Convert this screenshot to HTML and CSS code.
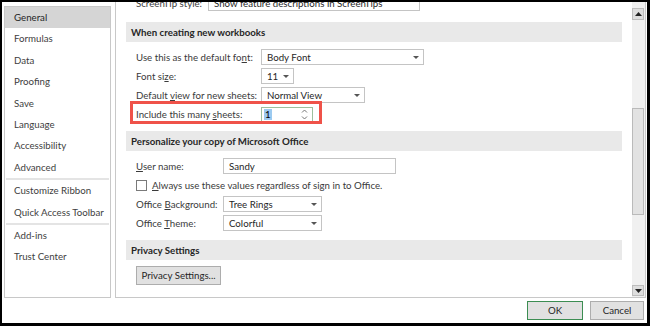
FILE: index.html
```html
<!DOCTYPE html>
<html>
<head>
<meta charset="utf-8">
<link rel="stylesheet" href="styles.css">
</head>
<body>
<div class="frame">
  <div class="dialog">
    <div class="main">
      <nav class="nav">
        <div class="nav-item active">General</div>
        <div class="nav-item">Formulas</div>
        <div class="nav-item">Data</div>
        <div class="nav-item">Proofing</div>
        <div class="nav-item">Save</div>
        <div class="nav-item">Language</div>
        <div class="nav-item">Accessibility</div>
        <div class="nav-item">Advanced</div>
        <div class="nav-sep"></div>
        <div class="nav-item">Customize Ribbon</div>
        <div class="nav-item">Quick Access Toolbar</div>
        <div class="nav-sep"></div>
        <div class="nav-item">Add-ins</div>
        <div class="nav-item">Trust Center</div>
      </nav>
      <section class="panel">
        <div class="viewport">
          <div class="content">
            <div class="row tip-row">
              <span class="label tip-label">ScreenTip style:</span>
              <div class="select tip-field">Show feature descriptions in ScreenTips</div>
            </div>

            <div class="band">When creating new workbooks</div>
            <div class="group wb">
              <div class="row">
                <span class="label">Use this as the default fo<u>n</u>t:</span>
                <div class="select w-font">Body Font<i class="caret"></i></div>
              </div>
              <div class="row">
                <span class="label">Font si<u>z</u>e:</span>
                <div class="select w-size">11<i class="caret"></i></div>
              </div>
              <div class="row">
                <span class="label">Default <u>v</u>iew for new sheets:</span>
                <div class="select w-view">Normal View<i class="caret"></i></div>
              </div>
              <div class="row hl-row">
                <span class="label">Include this many <u>s</u>heets:</span>
                <div class="spin"><span class="sel">1</span>
                  <svg class="spin-arrows" width="7" height="11" viewBox="0 0 7 11"><path d="M1 3.5 L3.5 1 L6 3.5 M1 7.5 L3.5 10 L6 7.5" fill="none" stroke="#777" stroke-width="1"/></svg>
                </div>
                <div class="highlight"></div>
              </div>
            </div>

            <div class="band">Personalize your copy of Microsoft Office</div>
            <div class="group pc">
              <div class="row">
                <span class="label"><u>U</u>ser name:</span>
                <div class="input w-user">Sandy</div>
              </div>
              <div class="row check-row">
                <span class="checkbox"></span>
                <span class="label"><u>A</u>lways use these values regardless of sign in to Office.</span>
              </div>
              <div class="row">
                <span class="label">Office <u>B</u>ackground:</span>
                <div class="select w-bg">Tree Rings<i class="caret"></i></div>
              </div>
              <div class="row">
                <span class="label">Office <u>T</u>heme:</span>
                <div class="select w-bg">Colorful<i class="caret"></i></div>
              </div>
            </div>

            <div class="band band-3">Privacy Settings</div>
            <div class="group pv">
              <button class="btn btn-priv">Privacy Settings...</button>
            </div>
          </div>
        </div>
        <div class="scrollbar">
          <div class="sb-btn sb-up"><svg width="7" height="4" viewBox="0 0 7 4"><path d="M0 4 L3.5 0 L7 4 Z" fill="#222"/></svg></div>
          <div class="sb-track"><div class="sb-thumb"></div></div>
          <div class="sb-btn sb-down"><svg width="7" height="4" viewBox="0 0 7 4"><path d="M0 0 L3.5 4 L7 0 Z" fill="#222"/></svg></div>
        </div>
      </section>
    </div>
    <div class="footer">
      <button class="btn ok">OK</button>
      <button class="btn cancel">Cancel</button>
    </div>
  </div>
</div>
</body>
</html>
```

FILE: styles.css
```css
* { box-sizing: border-box; }
html, body { margin: 0; padding: 0; }
body {
  background: #000;
  width: 650px;
  height: 326px;
  overflow: hidden;
  font-family: "Lato", "Open Sans", sans-serif;
  font-size: 9.7px;
  color: #3a3a3a;
}
.frame {
  padding: 2px 3px 3px 2px;
}
.dialog {
  width: 645px;
  height: 321px;
  background: #fff;
  display: flex;
  flex-direction: column;
}
.main {
  height: 296px;
  display: flex;
}
.nav {
  margin: 4px 0 0 2px;
  width: 107px;
  height: 292px;
  border: 1px solid #c8c8c8;
  display: flex;
  flex-direction: column;
}
.nav-item {
  height: 21.4px;
  line-height: 21.4px;
  padding-left: 9px;
  color: #3e3e3e;
  white-space: nowrap;
}
.nav-item.active {
  background: #d5d5d5;
  color: #262626;
}
.nav-sep {
  height: 2px;
  background: #e4e4e4;
  margin: 0 1px;
}
.panel {
  margin: 0 1px 0 4px;
  flex: 1;
  display: flex;
  border: 1px solid #c8c8c8;
  border-top: none;
  height: 296px;
}
.viewport {
  flex: 1;
  overflow: hidden;
  padding: 0 10px 0 10px;
}
.content {
  margin-top: -10px;
}
.row {
  display: flex;
  align-items: center;
  height: 16px;
  padding-left: 10px;
  position: relative;
  white-space: nowrap;
}
.label {
  flex-shrink: 0;
  color: #3a3a3a;
}
.label u { text-decoration-thickness: 1px; text-underline-offset: 1px; }
.tip-row { height: 21px; }
.tip-label { width: 72px; }
.tip-field { width: 212px; height: 21px; line-height: 19px; }
.band {
  margin-top: 9px;
  height: 20px;
  line-height: 20px;
  background: #e9e9e9;
  padding-left: 5px;
  font-weight: 700;
  color: #262626;
}
.group { padding-top: 7px; }
.group .row + .row { margin-top: 3px; }
.wb .label { width: 125px; }
.pc .label { width: 87px; }
.pc .check-row .label { width: auto; }
.select, .input {
  position: relative;
  flex-shrink: 0;
  height: 16px;
  line-height: 14px;
  border: 1px solid #c4c4c4;
  background: #fff;
  padding-left: 5px;
  color: #262626;
  overflow: hidden;
}
.caret {
  position: absolute;
  right: 4px;
  top: 6px;
  width: 0;
  height: 0;
  border-left: 3px solid transparent;
  border-right: 3px solid transparent;
  border-top: 3px solid #555;
}
.w-font { width: 163px; }
.w-size { width: 33px; }
.w-view { width: 104px; }
.w-user { width: 173px; }
.w-bg { width: 99px; }
.spin {
  position: relative;
  flex-shrink: 0;
  width: 52px;
  height: 15px;
  border: 1px solid #9dbf9d;
  padding-left: 2px;
  line-height: 13px;
  color: #000;
}
.spin .sel {
  display: inline-block;
  background: #9ccaf0;
  padding: 0 1px;
  height: 11px;
  line-height: 11px;
  margin-top: 1px;
  vertical-align: top;
}
.spin-arrows {
  position: absolute;
  right: 4px;
  top: 1px;
}
.highlight {
  position: absolute;
  left: 4px;
  top: -5px;
  width: 192px;
  height: 23px;
  border: 3px solid #ef5249;
}
.checkbox {
  flex-shrink: 0;
  width: 11px;
  height: 11px;
  border: 1px solid #7a7a7a;
  background: #fff;
  margin-right: 5px;
}
.band-3 { margin-top: 9px; }
.pv { padding-top: 6px; padding-left: 10px; }
.btn {
  font-family: inherit;
  font-size: 9.7px;
  color: #262626;
  background: #e1e1e1;
  border: 1px solid #adadad;
  padding: 0;
  margin: 0;
  height: 19px;
  line-height: 17px;
  white-space: nowrap;
}
.btn-priv { width: 85px; }
.scrollbar {
  width: 13px;
  display: flex;
  flex-direction: column;
  padding: 6px 1px 1px 0;
  background: #f0f0f0;
}
.sb-btn {
  display: flex;
  align-items: center;
  justify-content: center;
  background: #dedede;
  border: 1px solid #bdbdbd;
}
.sb-up { height: 12px; }
.sb-down { height: 11px; }
.sb-track { flex: 1; }
.sb-thumb {
  margin-top: 88px;
  height: 107px;
  background: #e2e2e2;
  border: 1px solid #bababa;
}
.footer {
  height: 25px;
  display: flex;
  justify-content: flex-end;
  align-items: flex-start;
  padding: 3px 3px 0 0;
  gap: 7px;
}
.ok { width: 56px; border-color: #3c8d52; }
.cancel { width: 54px; }
```
